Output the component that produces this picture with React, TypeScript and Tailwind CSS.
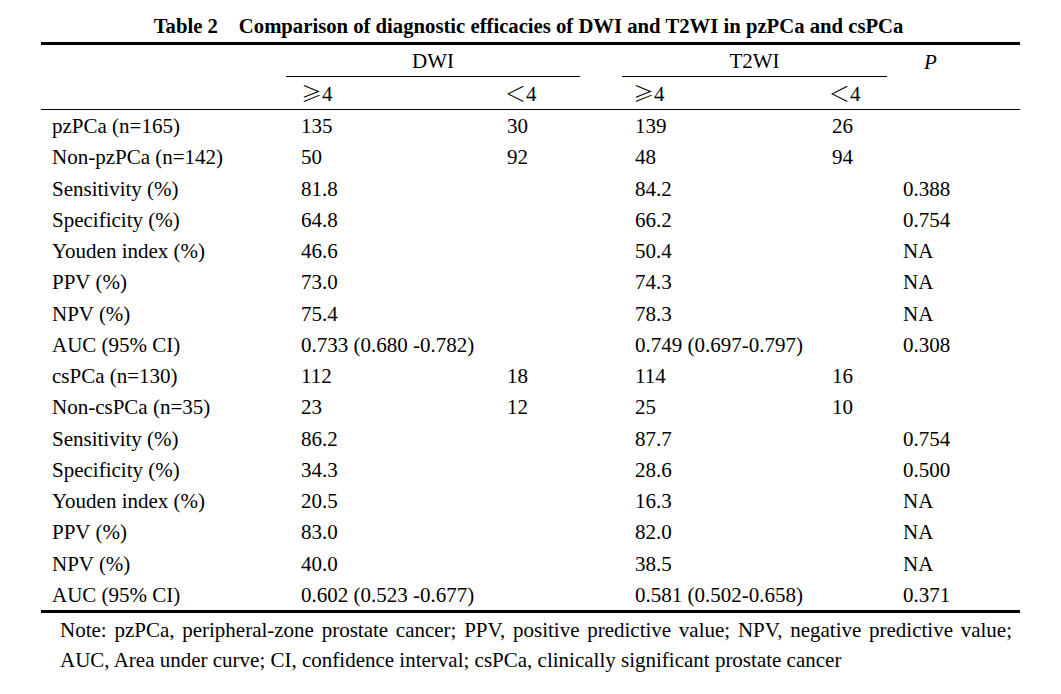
const rows: string[][] = [
  ["pzPCa (n=165)", "135", "30", "139", "26", ""],
  ["Non-pzPCa (n=142)", "50", "92", "48", "94", ""],
  ["Sensitivity (%)", "81.8", "", "84.2", "", "0.388"],
  ["Specificity (%)", "64.8", "", "66.2", "", "0.754"],
  ["Youden index (%)", "46.6", "", "50.4", "", "NA"],
  ["PPV (%)", "73.0", "", "74.3", "", "NA"],
  ["NPV (%)", "75.4", "", "78.3", "", "NA"],
  ["AUC (95% CI)", "0.733 (0.680 -0.782)", "", "0.749 (0.697-0.797)", "", "0.308"],
  ["csPCa (n=130)", "112", "18", "114", "16", ""],
  ["Non-csPCa (n=35)", "23", "12", "25", "10", ""],
  ["Sensitivity (%)", "86.2", "", "87.7", "", "0.754"],
  ["Specificity (%)", "34.3", "", "28.6", "", "0.500"],
  ["Youden index (%)", "20.5", "", "16.3", "", "NA"],
  ["PPV (%)", "83.0", "", "82.0", "", "NA"],
  ["NPV (%)", "40.0", "", "38.5", "", "NA"],
  ["AUC (95% CI)", "0.602 (0.523 -0.677)", "", "0.581 (0.502-0.658)", "", "0.371"],
];

const grid = "grid grid-cols-[245px_210px_84px_42px_200px_65px_133px]";
const sym = "font-['Noto_Sans_CJK_SC',sans-serif] font-light";

export default function App() {
  return (
    <div className="min-h-screen bg-white text-black font-['Liberation_Serif','Times_New_Roman',serif]">
      <div className="ml-[41px] w-[979px]">
        {/* Caption */}
        <h1 className="pt-[14px] pr-[4px] mb-[4px] text-center text-[20.7px] font-bold leading-[24px] whitespace-nowrap">
          Table 2<span className="inline-block w-[21px]" />Comparison of diagnostic efficacies of DWI and T2WI in pzPCa and csPCa
        </h1>

        <div className="border-t-[3px] border-black text-[21px]">
          {/* Header row 1 */}
          <div className={grid}>
            <div />
            <div className="col-span-2 h-[32px] pt-[3px] border-b border-black flex items-center justify-center">DWI</div>
            <div />
            <div className="col-span-2 h-[32px] pt-[3px] border-b border-black flex items-center justify-center">T2WI</div>
            <div className="h-[32px] pt-[3px] flex items-center pl-[37px] italic font-normal">P</div>
          </div>

          {/* Header row 2 */}
          <div className={`${grid} h-[33px] border-b border-black items-center`}>
            <div />
            <div className="pl-[15px]"><span className={sym}>≥</span>4</div>
            <div className="pl-[9px]"><span className={sym}>＜</span>4</div>
            <div />
            <div className="pl-[11px]"><span className={sym}>≥</span>4</div>
            <div className="pl-[7px]"><span className={sym}>＜</span>4</div>
            <div />
          </div>

          {/* Body */}
          {rows.map((r, i) => (
            <div key={i} className={`${grid} h-[31.25px] pt-[1px] items-center whitespace-nowrap`}>
              <div className="pl-[11px]">{r[0]}</div>
              <div className="pl-[15px]">{r[1]}</div>
              <div className="pl-[11px]">{r[2]}</div>
              <div />
              <div className="pl-[13px]">{r[3]}</div>
              <div className="pl-[10px]">{r[4]}</div>
              <div className="pl-[16px]">{r[5]}</div>
            </div>
          ))}
        </div>

        {/* Footnote */}
        <div className="border-t-[3px] border-black pt-[2px] pl-[19px] pr-[8px] text-[21px] leading-[30px]">
          <p className="text-justify [text-align-last:justify] whitespace-nowrap">
            Note: pzPCa, peripheral-zone prostate cancer; PPV, positive predictive value; NPV, negative predictive value;
          </p>
          <p>AUC, Area under curve; CI, confidence interval; csPCa, clinically significant prostate cancer</p>
        </div>
      </div>
    </div>
  );
}
